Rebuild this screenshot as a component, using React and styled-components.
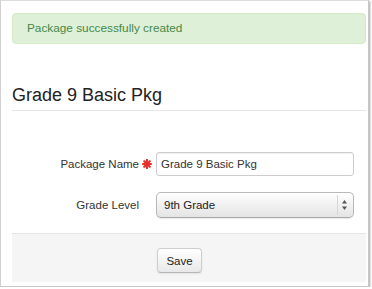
import styled, { createGlobalStyle } from "styled-components";

const GlobalStyle = createGlobalStyle`
  html, body {
    margin: 0;
    padding: 0;
    background: #fff;
  }
  body {
    font-family: "Liberation Sans", Arial, sans-serif;
    color: #333;
  }
`;

const Window = styled.div`
  box-sizing: border-box;
  width: 369px;
  height: 287px;
  padding: 12px 2px 0 11px;
  border: 1px solid #c6c6c6;
  border-top-color: #dcdcdc;
  border-left-color: #d0d0d0;
  background: #fff;
  box-shadow: 1px 1px 2px rgba(0, 0, 0, 0.35);
`;

const Alert = styled.div`
  box-sizing: border-box;
  height: 31px;
  padding: 6px 14px;
  background: #dff0d8;
  border: 1px solid #d6e9c6;
  border-radius: 4px;
  color: #468847;
  font-size: 11.8px;
  line-height: 17px;
`;

const Heading = styled.h2`
  margin: 41px 0 0;
  padding-bottom: 5px;
  border-bottom: 1px solid #e5e5e5;
  font-size: 18px;
  font-weight: normal;
  line-height: 20px;
  color: #222;
`;

const FormBody = styled.div`
  display: grid;
  grid-template-columns: 127px 17px 198px;
  row-gap: 16px;
  align-items: center;
  padding: 41px 0 15px;
`;

const Label = styled.label`
  text-align: right;
  font-size: 11.5px;
  color: #333;
`;

const Required = styled.span`
  display: flex;
  align-items: center;
  justify-content: center;
  padding-right: 1px;
`;

const TextInput = styled.input`
  box-sizing: border-box;
  width: 198px;
  height: 24px;
  padding: 0 4px;
  border: 1px solid #cccccc;
  border-radius: 3px;
  font-family: inherit;
  font-size: 11.5px;
  color: #333;
  box-shadow: inset 0 1px 1px rgba(0, 0, 0, 0.06);
  outline: none;
`;

const SelectWrap = styled.div`
  position: relative;
  width: 198px;
  height: 26px;
`;

const Select = styled.select`
  appearance: none;
  box-sizing: border-box;
  width: 100%;
  height: 26px;
  padding: 0 20px 0 7px;
  border: 1px solid #b9b9b9;
  border-bottom-color: #a8a8a8;
  border-radius: 5px;
  background: linear-gradient(#ffffff, #f1f1f1 50%, #e4e4e4);
  font-family: inherit;
  font-size: 11.5px;
  color: #222;
  box-shadow: 0 1px 1px rgba(0, 0, 0, 0.08);
  outline: none;
`;

const Arrows = styled.svg`
  position: absolute;
  top: 0;
  right: 0;
  pointer-events: none;
`;

const Footer = styled.div`
  box-sizing: border-box;
  height: 49px;
  padding: 14px 0 0 145px;
  background: #f5f5f5;
  border-top: 1px solid #e5e5e5;
`;

const Button = styled.button`
  box-sizing: border-box;
  width: 45px;
  height: 25px;
  padding: 0;
  border: 1px solid #cfcfcf;
  border-bottom-color: #b5b5b5;
  border-radius: 4px;
  background: linear-gradient(#ffffff, #e8e8e8);
  box-shadow: inset 0 1px 0 rgba(255, 255, 255, 0.3), 0 1px 2px rgba(0, 0, 0, 0.08);
  font-family: inherit;
  font-size: 11.5px;
  color: #222;
`;

const Asterisk = () => (
  <svg width="10" height="10" viewBox="0 0 10 10">
    <g stroke="#e6322d" strokeWidth="2.2" strokeLinecap="round">
      <line x1="5" y1="1" x2="5" y2="9" />
      <line x1="1" y1="5" x2="9" y2="5" />
      <line x1="2.2" y1="2.2" x2="7.8" y2="7.8" />
      <line x1="7.8" y1="2.2" x2="2.2" y2="7.8" />
    </g>
  </svg>
);

export default function App() {
  return (
    <>
      <GlobalStyle />
      <Window>
        <Alert>Package successfully created</Alert>
        <Heading>Grade 9 Basic Pkg</Heading>
        <FormBody>
          <Label htmlFor="pkg-name">Package Name</Label>
          <Required>
            <Asterisk />
          </Required>
          <TextInput id="pkg-name" type="text" defaultValue="Grade 9 Basic Pkg" />

          <Label htmlFor="grade-level">Grade Level</Label>
          <span />
          <SelectWrap>
            <Select id="grade-level" defaultValue="9">
              <option value="9">9th Grade</option>
              <option value="10">10th Grade</option>
              <option value="11">11th Grade</option>
              <option value="12">12th Grade</option>
            </Select>
            <Arrows width="18" height="26" viewBox="0 0 18 26">
              <line x1="1.5" y1="3" x2="1.5" y2="23" stroke="#d6d6d6" />
              <path d="M6 11.5 L8.5 8 L11 11.5 Z" fill="#555" />
              <path d="M6 14.5 L8.5 18 L11 14.5 Z" fill="#555" />
            </Arrows>
          </SelectWrap>
        </FormBody>
        <Footer>
          <Button type="button">Save</Button>
        </Footer>
      </Window>
    </>
  );
}
